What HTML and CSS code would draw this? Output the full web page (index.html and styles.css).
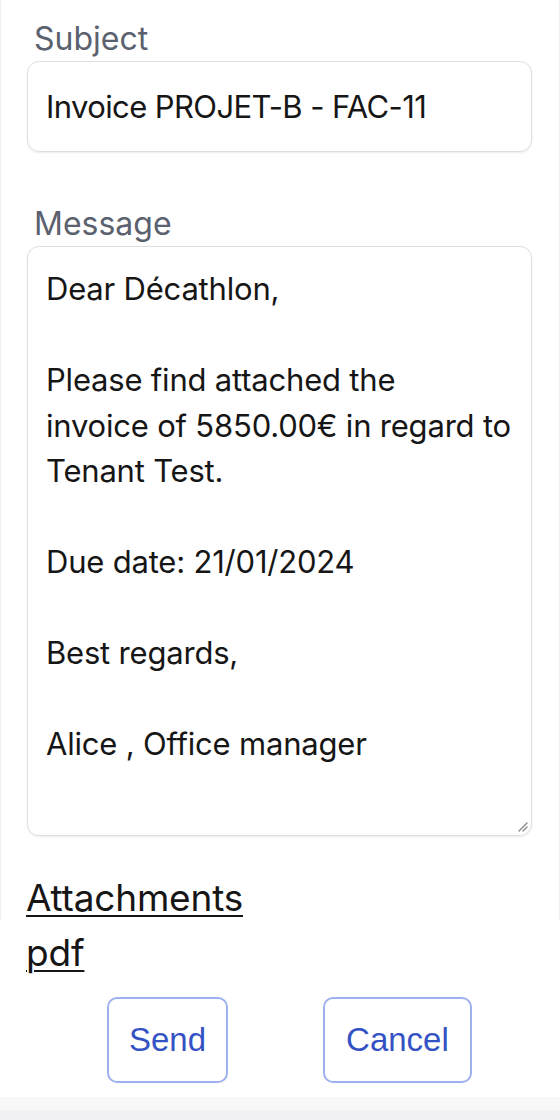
FILE: index.html
```html
<!DOCTYPE html>
<html lang="en">
<head>
<meta charset="utf-8">
<title>Send invoice</title>
<link rel="stylesheet" href="styles.css">
</head>
<body>
<main class="page">
  <section class="form">
    <div class="field field-subject">
      <label class="label" for="subject">Subject</label>
      <div class="input" id="subject">Invoice PROJET-B - FAC-11</div>
    </div>
    <div class="field field-message">
      <label class="label" for="message">Message</label>
      <div class="textarea" id="message">
        <p class="line">Dear Décathlon,</p>
        <p class="line">&nbsp;</p>
        <p class="line">Please find attached the</p>
        <p class="line">invoice of 5850.00€ in regard to</p>
        <p class="line">Tenant Test.</p>
        <p class="line">&nbsp;</p>
        <p class="line">Due date: 21/01/2024</p>
        <p class="line">&nbsp;</p>
        <p class="line">Best regards,</p>
        <p class="line">&nbsp;</p>
        <p class="line">Alice , Office manager</p>
        <svg class="grip" width="12" height="12" viewBox="0 0 12 12" aria-hidden="true">
          <path d="M11 3 L3 11 M11 7 L7 11" stroke="#8a8a8a" stroke-width="1.4" stroke-linecap="round" fill="none"/>
        </svg>
      </div>
    </div>
    <a class="link link-title" href="#">Attachments</a>
  </section>
  <div class="files">
    <a class="link" href="#">pdf</a>
  </div>
  <div class="actions">
    <button class="btn" type="button">Send</button>
    <button class="btn" type="button">Cancel</button>
  </div>
  <div class="footer"></div>
</main>
</body>
</html>
```

FILE: styles.css
```css
* { box-sizing: border-box; }

html, body {
  margin: 0;
  padding: 0;
  background: #ffffff;
}

body {
  font-family: Inter, "Noto Sans", sans-serif;
  color: #1f1f1f;
}

.page {
  width: 560px;
  height: 1120px;
  display: flex;
  flex-direction: column;
  background: #ffffff;
}

.form {
  display: flex;
  flex-direction: column;
  align-items: stretch;
  padding: 21px 27px 0 26px;
  border-left: 1px solid #efeff1;
  border-right: 1px solid #efeff1;
}

.field {
  display: flex;
  flex-direction: column;
  gap: 4px;
}

.field-message {
  margin-top: 54px;
}

.label {
  font-size: 32px;
  line-height: 36px;
  color: #5b616e;
  padding-left: 7px;
}

.input {
  height: 91px;
  display: flex;
  align-items: center;
  padding: 0 18px;
  border: 1.5px solid #dddee2;
  border-radius: 12px;
  box-shadow: 0 1px 2px rgba(0, 0, 0, 0.08);
  font-size: 31px;
  line-height: 36px;
  letter-spacing: -0.6px;
  color: #161616;
}

.textarea {
  position: relative;
  height: 590px;
  padding: 19px 18px 0 18px;
  border: 1.5px solid #dddee2;
  border-radius: 12px;
  box-shadow: 0 1px 2px rgba(0, 0, 0, 0.08);
  font-size: 31px;
  line-height: 45.5px;
  letter-spacing: -0.2px;
  color: #161616;
}

.line {
  margin: 0;
  white-space: nowrap;
}

.grip {
  position: absolute;
  right: 3px;
  bottom: 3px;
}

.link {
  align-self: flex-start;
  font-size: 37px;
  line-height: 55px;
  color: #161616;
  text-decoration: underline;
  text-underline-offset: 4px;
  text-decoration-thickness: 2px;
  letter-spacing: -0.2px;
}

.link-title {
  margin-top: 38px;
  margin-left: -1px;
  line-height: 47px;
}

.files {
  display: flex;
  padding: 0 0 0 26px;
  margin-top: 4px;
}

.actions {
  display: flex;
  gap: 95px;
  padding: 17px 0 0 107px;
  height: 117px;
}

.btn {
  height: 86px;
  padding: 0 20px;
  background: #ffffff;
  border: 2px solid #9db1ee;
  border-radius: 10px;
  font-family: "Liberation Sans", Arial, sans-serif;
  font-size: 33px;
  color: #3552c4;
}

.btn + .btn {
  padding: 0 21px;
}

.footer {
  flex: 1;
  background: #f8f8f9;
  border-bottom: 10px solid #f1f1f3;
}
```
